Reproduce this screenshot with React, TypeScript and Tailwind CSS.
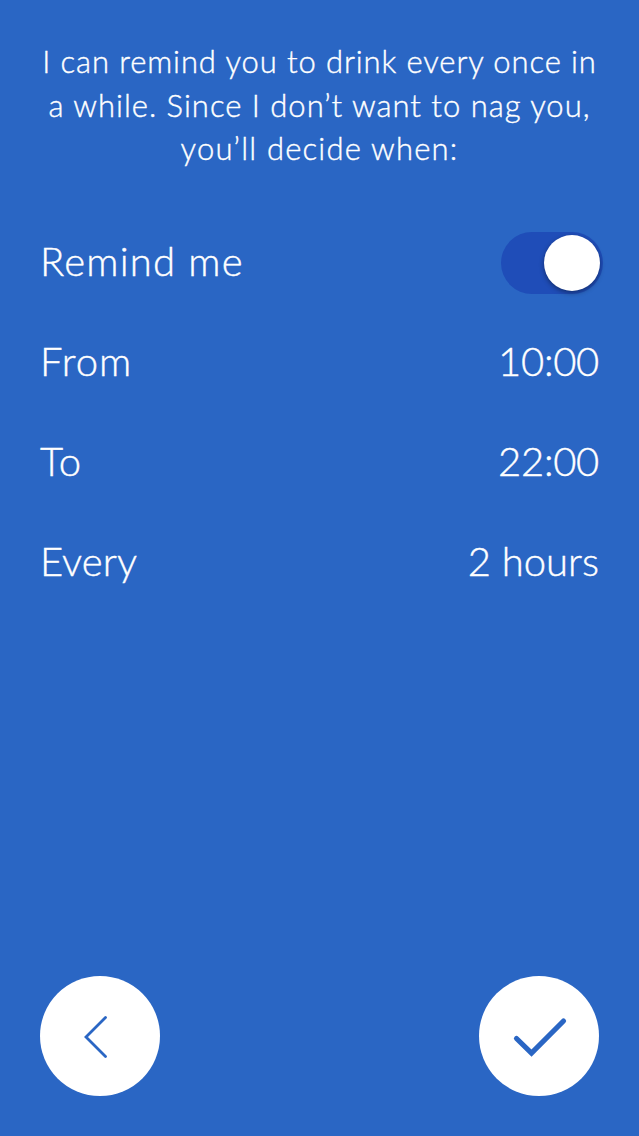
import { useState } from "react";

type Setting = {
  label: string;
  value: string;
  labelClass: string;
  valueClass: string;
};

const settings: Setting[] = [
  { label: "From", value: "10:00", labelClass: "tracking-[1px]", valueClass: "tracking-[-0.3px]" },
  { label: "To", value: "22:00", labelClass: "tracking-[0.5px]", valueClass: "tracking-[-0.3px]" },
  { label: "Every", value: "2 hours", labelClass: "tracking-[0.1px]", valueClass: "tracking-[0px]" },
];

export default function App() {
  const [enabled, setEnabled] = useState(true);

  return (
    <div className="flex h-screen w-full flex-col bg-[#2a66c4] px-10 pt-10 pb-10 font-['Lato','Liberation_Sans',sans-serif] text-white">
      <p className="-mx-4 text-center text-[31px] leading-[43.5px] font-light [-webkit-text-stroke:0.4px_white]">
        <span className="block tracking-[0.9px]">I can remind you to drink every once in</span>
        <span className="block tracking-[1px]">a while. Since I don’t want to nag you,</span>
        <span className="block tracking-[1.2px]">you’ll decide when:</span>
      </p>

      <div className="mt-10 text-[40px] font-light [-webkit-text-stroke:0.4px_white]">
        <div className="flex h-[100px] items-center justify-between">
          <span className="tracking-[1.2px]">Remind me</span>
          <button
            role="switch"
            aria-checked={enabled}
            aria-label="Remind me"
            onClick={() => setEnabled(!enabled)}
            className={`mt-1 -mr-1 flex h-[62px] w-[102px] items-center rounded-full bg-[#1f4db8] px-[3px] ${
              enabled ? "justify-end" : "justify-start"
            }`}
          >
            <span className="size-14 rounded-full bg-white shadow-[0_2px_5px_rgba(0,0,0,0.4)]" />
          </button>
        </div>
        {settings.map((item) => (
          <div key={item.label} className="flex h-[100px] items-center justify-between">
            <span className={item.labelClass}>{item.label}</span>
            <span className={item.valueClass}>{item.value}</span>
          </div>
        ))}
      </div>

      <div className="mt-auto flex justify-between">
        <button aria-label="Back" className="size-[120px] rounded-full bg-white">
          <svg viewBox="0 0 120 120" className="size-full fill-none stroke-[#2a66c4]" strokeWidth="2.8" strokeLinecap="round">
            <path d="M65.5 41.5 46 61 65.5 80.5" />
          </svg>
        </button>
        <button aria-label="Confirm" className="size-[120px] rounded-full bg-white">
          <svg viewBox="0 0 120 120" className="size-full fill-none stroke-[#2a66c4]" strokeWidth="5.2" strokeLinecap="round">
            <path d="M37.5 62.5 52.5 77 84.5 45" />
          </svg>
        </button>
      </div>
    </div>
  );
}
